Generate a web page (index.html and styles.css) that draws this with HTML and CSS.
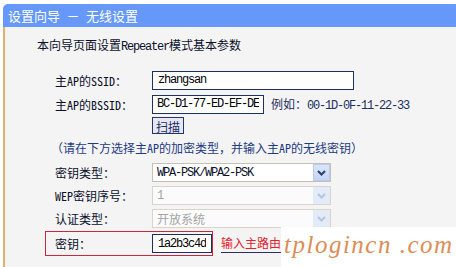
FILE: index.html
```html
<!DOCTYPE html>
<html lang="zh-CN">

<head>
    <meta charset="UTF-8">
    <title>设置向导 - 无线设置</title>
    <link rel="stylesheet" href="styles.css">
</head>

<body>
    <div class="wizard">
        <div class="title-bar">设置向导 － 无线设置</div>

        <div class="panel">
            <p class="intro">本向导页面设置<span class="mono">Repeater</span>模式基本参数</p>

            <div class="form">
                <div class="row">
                    <span class="label">主AP的SSID：</span>
                    <input class="field field-ssid" type="text" value="zhangsan">
                </div>

                <div class="row">
                    <span class="label">主AP的BSSID：</span>
                    <input class="field field-bssid" type="text" value="BC-D1-77-ED-EF-DE">
                    <span class="example">例如：<span class="mono">00-1D-0F-11-22-33</span></span>
                </div>

                <div class="row row-button">
                    <span class="label"></span>
                    <button class="scan-button">扫描</button>
                </div>

                <p class="note">（请在下方选择主AP的加密类型，并输入主AP的无线密钥）</p>

                <div class="row row-select">
                    <span class="label">密钥类型：</span>
                    <div class="select">
                        <span class="select-value mono">WPA-PSK/WPA2-PSK</span>
                        <span class="select-arrow">
                            <svg width="9" height="6" viewBox="0 0 9 6">
                                <path d="M1 1 L4.5 4.5 L8 1" fill="none" stroke="currentColor" stroke-width="2" />
                            </svg>
                        </span>
                    </div>
                </div>

                <div class="row row-select">
                    <span class="label">WEP密钥序号：</span>
                    <div class="select disabled">
                        <span class="select-value mono">1</span>
                        <span class="select-arrow">
                            <svg width="9" height="6" viewBox="0 0 9 6">
                                <path d="M1 1 L4.5 4.5 L8 1" fill="none" stroke="currentColor" stroke-width="2" />
                            </svg>
                        </span>
                    </div>
                </div>

                <div class="row row-select">
                    <span class="label">认证类型：</span>
                    <div class="select disabled">
                        <span class="select-value">开放系统</span>
                        <span class="select-arrow">
                            <svg width="9" height="6" viewBox="0 0 9 6">
                                <path d="M1 1 L4.5 4.5 L8 1" fill="none" stroke="currentColor" stroke-width="2" />
                            </svg>
                        </span>
                    </div>
                </div>

                <div class="row row-key">
                    <div class="highlight">
                        <span class="label">密钥：</span>
                        <input class="field field-key" type="text" value="1a2b3c4d">
                    </div>
                    <span class="hint">输入主路由器的无线密钥</span>
                </div>
            </div>
        </div>

        <!-- site watermark pasted over the screenshot -->
        <div class="watermark">tplogincn .com</div>
    </div>
</body>

</html>
```

FILE: styles.css
```css
/* Base */
* {
    margin: 0;
    padding: 0;
    box-sizing: border-box;
}

body {
    background: #ffffff;
    height: 267px;
    overflow: hidden;
    font-family: "Noto Sans Mono CJK SC", "Noto Sans CJK SC", sans-serif;
    font-size: 12px;
    color: #0a0f2a;
}

.mono {
    font-family: "Liberation Mono", monospace;
    letter-spacing: -1.2px;
}

/* Wizard frame */
.wizard {
    position: relative;
    margin: 4px 0 0 3px;
    height: 263px;
    display: flex;
    flex-direction: column;
}

.title-bar {
    height: 23px;
    line-height: 23px;
    padding-left: 5px;
    background: #6598f8;
    border-top-left-radius: 5px;
    color: #ffffff;
    font-size: 13px;
}

.panel {
    flex: 1;
    background: #f4f4f4;
    border-left: 2px solid #e4ae6c;
    padding: 10px 0 0 32px;
}

.intro {
    line-height: 16px;
    margin-bottom: 13px;
}

/* Form rows */
.form {
    padding-left: 8px;
}

.row {
    display: flex;
    align-items: center;
    height: 24px;
    padding-left: 10px;
}

.row-button {
    height: 19px;
}

.row-select {
    height: 23px;
}

.label {
    width: 97px;
    flex-shrink: 0;
}

.field {
    height: 19px;
    border: 1px solid #1c2f66;
    background: #ffffff;
    padding: 0 5px;
    font-family: "Liberation Mono", monospace;
    font-size: 12px;
    letter-spacing: -1.2px;
    color: #000;
    outline: none;
}

.field-ssid {
    width: 202px;
}

.field-bssid {
    width: 112px;
    padding: 0 4px;
}

.field-key {
    width: 60px;
}

.example {
    margin-left: 7px;
    color: #1c2f5e;
}

.scan-button {
    height: 17px;
    width: 32px;
    border: 1px solid #26336e;
    background: #e6e6f4;
    font-family: inherit;
    font-size: 12px;
    color: #1c2f5e;
}

.note {
    line-height: 16px;
    margin: 5px 0 5px 6px;
    color: #1d3a86;
}

/* Fake drop-down lists */
.select {
    display: flex;
    align-items: center;
    width: 179px;
    height: 19px;
    border: 1px solid #c5c0b2;
    background: #ffffff;
}

.select-value {
    flex: 1;
    padding-left: 4px;
}

.select-arrow {
    display: flex;
    align-items: center;
    justify-content: center;
    width: 17px;
    height: 17px;
    background: linear-gradient(#dbe6fb, #c4d5f4);
    border: 1px solid #b8cbee;
    color: #2c3e6e;
}

.select.disabled {
    background: #fbfbfb;
    border-color: #d8d4c8;
}

.select.disabled .select-value {
    color: #a4a4a4;
}

.select.disabled .select-arrow {
    background: #e3ebf9;
    border-color: #e3ebf9;
    color: #b6c3da;
}

/* Key row with red highlight */
.row-key {
    height: 25px;
    padding-left: 0;
    margin-top: 1px;
    align-items: stretch;
}

.highlight {
    display: flex;
    align-items: center;
    width: 168px;
    padding-left: 9px;
    border: 1px solid #c9283e;
}

/* the watermark hides the end of this text */
.hint {
    align-self: center;
    width: 61px;
    overflow: hidden;
    margin-left: 8px;
    padding-bottom: 1px;
    border-bottom: 1px solid #2a2f6a;
    color: #e8212e;
    white-space: nowrap;
}

.watermark {
    position: absolute;
    left: 278px;
    top: 223px;
    right: 0;
    bottom: 0;
    background: #ffffff;
    padding: 4px 0 0 3px;
    font-family: "Liberation Serif", serif;
    font-style: italic;
    font-size: 25px;
    letter-spacing: 1.5px;
    color: #e08c55;
    white-space: nowrap;
}
```
